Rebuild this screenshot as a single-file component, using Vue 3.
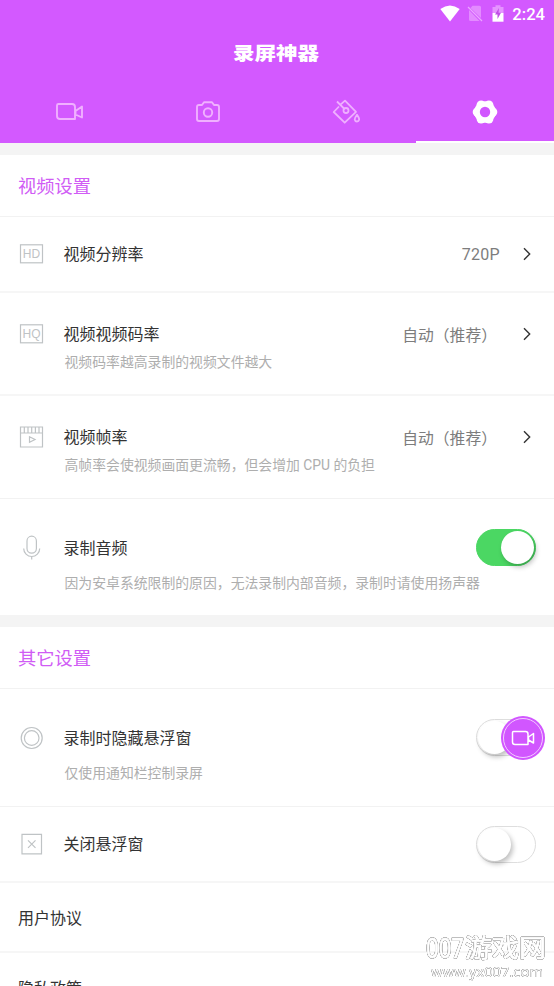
<script setup>
const tabs = ['video', 'camera', 'paint', 'settings']
const sections = [
  {
    title: '视频设置',
    rows: [
      { icon: 'hd', label: '视频分辨率', value: '720P', kind: 'short' },
      { icon: 'hq', label: '视频视频码率', value: '自动（推荐）', cjk: true, note: '视频码率越高录制的视频文件越大', kind: 'medium' },
      { icon: 'film', label: '视频帧率', value: '自动（推荐）', cjk: true, note: '高帧率会使视频画面更流畅，但会增加 CPU 的负担', kind: 'medium thin' },
      { icon: 'mic', label: '录制音频', toggle: 'on', note: '因为安卓系统限制的原因，无法录制内部音频，录制时请使用扬声器', kind: 'tall last' },
    ],
  },
  {
    title: '其它设置',
    rows: [
      { icon: 'ring', label: '录制时隐藏悬浮窗', toggle: 'off', note: '仅使用通知栏控制录屏', kind: 'tall' },
      { icon: 'close', label: '关闭悬浮窗', toggle: 'off', kind: 'short' },
      { label: '用户协议', kind: 'link' },
      { label: '隐私政策', kind: 'link' },
    ],
  },
]
</script>

<template>
  <div class="screen">
    <header class="header">
      <div class="status">
        <svg class="wifi" width="20" height="17" viewBox="0 0 20 17"><path d="M.3 4Q10-3.200 19.700 4L10 16.500Z" fill="#fff" /></svg>
        <svg class="sim" width="16" height="17" viewBox="0 0 16 17"><path d="M5.500.8H12.500Q14 .8 14 2.300V13L3.500 3ZM2 5L12.500 16H3.500Q2 16 2 14.500Z" fill="#e89cff" opacity=".75" /><path d="M1 2L15 16" stroke="#eba5ff" stroke-width="1.300" /></svg>
        <svg class="battery" width="12" height="17" viewBox="0 0 12 17"><path d="M.5 2H3.500V.3H8.500V2H11.500V8H.5Z" fill="#e594ff" /><path d="M.5 8H11.500V16.700H.5Z" fill="#fff" /><path d="M7 3L3 9.500H5.500V14L9 7.800H6.500Z" fill="#c04ee6" /></svg>
        <span class="clock">2:24</span>
      </div>
      <h1 class="app-title">录屏神器</h1>
      <nav class="tabs">
        <div v-for="tab in tabs" :key="tab" class="tab" :class="{ active: tab === 'settings' }">
          <svg v-if="tab === 'video'" width="28" height="26" viewBox="0 0 28 26" fill="none" stroke="#f0b0ff" stroke-width="1.900" stroke-linejoin="round"><path d="M3.500 5H17Q20 5 20 8V20H5Q2 20 2 17V6.500Q2 5 3.500 5ZM20.500 12L27 7.500V18.500L20.500 15.500Z" /></svg>
          <svg v-else-if="tab === 'camera'" width="26" height="26" viewBox="0 0 26 26" fill="none" stroke="#f0b0ff" stroke-width="1.900" stroke-linejoin="round"><path d="M4 6H7L9 3.200H17L19 6H22Q24 6 24 8V20Q24 22 22 22H4Q2 22 2 20V8Q2 6 4 6Z" /><circle cx="13" cy="13.500" r="4.200" /></svg>
          <svg v-else-if="tab === 'paint'" width="28" height="26" viewBox="0 0 28 26" fill="none" stroke="#efb0ff" stroke-width="1.800" stroke-linejoin="round"><path d="M5 2.500L12.500 10M8.500 5.700L13 1.700L24 12.800L12.700 23.700L1.700 13L7 7.500" /><circle cx="14" cy="11.500" r="2.500" /><path d="M25 15.800Q27.200 19 27.200 20.500A2.300 2.500 0 0 1 22.700 20.500Q22.700 19 25 15.800Z" /></svg>
          <svg v-else width="26" height="26" viewBox="0 0 26 26">
            <g fill="#fff"><circle cx="13" cy="13" r="10.800" /><circle cx="5.200" cy="13" r="4.500" /><circle cx="20.800" cy="13" r="4.500" /><circle cx="9.100" cy="5.900" r="4.500" /><circle cx="16.900" cy="5.900" r="4.500" /><circle cx="9.100" cy="20.100" r="4.500" /><circle cx="16.900" cy="20.100" r="4.500" /></g>
            <circle cx="13" cy="13" r="5.200" fill="#d156ff" />
          </svg>
        </div>
      </nav>
    </header>

    <section v-for="section in sections" :key="section.title" class="section">
      <h2 class="section-title">{{ section.title }}</h2>
      <div v-for="row in section.rows" :key="row.label" class="row" :class="row.kind">
        <div class="main">
          <div v-if="row.icon" class="icon">
            <svg width="28" height="28" viewBox="0 0 28 28" fill="none" stroke="#bfc3c5" stroke-width="1.200">
              <template v-if="row.icon === 'hd' || row.icon === 'hq'">
                <rect x="2.500" y="4.800" width="22" height="18" />
                <text x="13.500" y="17.700" text-anchor="middle" class="badge-text">{{ row.icon.toUpperCase() }}</text>
              </template>
              <template v-else-if="row.icon === 'film'">
                <path d="M2.500 4H24.500V24H2.500ZM2.500 10H24.500M6.300 4V10M10 4V10M13.700 4V10M17.400 4V10M21 4V10M11.500 13.800L17 16.500L11.500 19.200Z" />
              </template>
              <template v-else-if="row.icon === 'mic'">
                <rect x="9" y="2.200" width="9.400" height="17" rx="4.700" /><path d="M5.700 14.500A8 8 0 0 0 21.700 14.500M13.700 22V25.500" />
              </template>
              <template v-else-if="row.icon === 'ring'">
                <circle cx="13.700" cy="14" r="10.500" /><circle cx="13.700" cy="14" r="7.300" />
              </template>
              <path v-else d="M4 4.300H23.500V23.800H4ZM10 10.300L17.500 17.800M17.500 10.300L10 17.800" />
            </svg>
          </div>
          <span class="label">{{ row.label }}</span>
          <template v-if="row.value">
            <span class="value" :class="{ cjk: row.cjk }">{{ row.value }}</span>
            <svg class="chevron" width="10" height="14" viewBox="0 0 10 14"><path d="M2 1.200L7.700 7L2 12.800" fill="none" stroke="#333" stroke-width="1.400" /></svg>
          </template>
          <div v-if="row.toggle" class="toggle" :class="row.toggle"><i class="knob"></i></div>
        </div>
        <p v-if="row.note" class="note">{{ row.note }}</p>
      </div>
    </section>

    <div class="floating">
      <svg width="44" height="44" viewBox="0 0 44 44"><circle cx="22" cy="22" r="22" fill="#d156ff" /><circle cx="22" cy="22" r="19.500" fill="none" stroke="#f3ccff" /><path d="M12.500 15.500H24.500Q27 15.500 27 18V28.500H14Q11.500 28.500 11.500 26V16.500Q11.500 15.500 12.500 15.500ZM27.500 21L32.500 17.500V27L27.500 24Z" fill="none" stroke="#fff" stroke-width="1.500" stroke-linejoin="round" /></svg>
    </div>

    <div class="watermark">
      <svg width="130" height="62" viewBox="0 0 130 62">
        <text x="4" y="33" textLength="38" lengthAdjust="spacingAndGlyphs" class="mark num">007</text>
        <text x="43" y="32" textLength="81" lengthAdjust="spacingAndGlyphs" class="mark name">游戏网</text>
        <text x="9" y="52" textLength="112" lengthAdjust="spacingAndGlyphs" class="mark url">www.yx007.com</text>
      </svg>
    </div>
  </div>
</template>

<style>
body { margin: 0; overflow: hidden; }
</style>

<style scoped>
.screen {
  position: relative;
  width: 554px;
  height: 986px;
  overflow: hidden;
  background: #f4f4f4;
  font-family: Roboto, "Noto Sans CJK SC", sans-serif;
}
.header {
  display: flex;
  flex-direction: column;
  height: 143px;
  background: #d359ff;
}
.status {
  display: flex;
  align-items: center;
  height: 27px;
  padding-right: 9px;
  justify-content: flex-end;
  color: #fff;
}
.sim { margin-left: 7px; }
.battery { margin-left: 9px; }
.clock {
  margin-left: 8px;
  font-size: 16.6px;
  font-weight: 500;
  line-height: 27px;
  padding-top: 2px;
}
.app-title {
  margin: 0;
  height: 53px;
  line-height: 53px;
  text-align: center;
  color: #fff;
  font-size: 21.5px;
  font-weight: 900;
  transform: translateX(-1px) scaleY(.87);
}
.tabs { display: flex; flex: 1; }
.tab {
  flex: 1;
  display: flex;
  align-items: center;
  justify-content: center;
  box-sizing: border-box;
  padding-top: 1px;
}
.tab.active { border-bottom: 2px solid #fff; padding-top: 2px; }
.section { margin-top: 12px; background: #fff; }
.section-title {
  box-sizing: border-box;
  height: 62px;
  margin: 0;
  padding: 1px 0 0 18px;
  border-bottom: 1px solid #f2f2f2;
  color: #d05cf5;
  font-size: 18.3px;
  font-weight: 400;
  line-height: 62px;
}
.row {
  box-sizing: border-box;
  padding: 29px 18px 0;
  border-bottom: 2px solid #f6f6f6;
}
.short { height: 76px; padding-top: 25px; }
.medium { height: 103px; }
.tall { height: 118px; padding-top: 37px; border-bottom: 1px solid #f2f2f2; }
.thin { border-bottom: 1px solid #f2f2f2; }
.last { height: 116px; border-bottom: none; }
.link { height: 70px; padding-top: 23px; }
.main { display: flex; align-items: center; height: 24px; }
.icon { width: 45.5px; flex: none; display: flex; }
.label { flex: 1; color: #333; font-size: 16px; line-height: 24px; padding-top: 2px; }
.value { color: #7d7d7d; font-size: 16px; letter-spacing: .3px; margin-right: 22px; padding-top: 1px; }
.value.cjk { letter-spacing: 0; font-size: 15.8px; margin-right: 25px; padding-top: 0; }
.chevron { margin-right: 4px; }
.note {
  margin: 6px 0 0 46.5px;
  color: #aeaeae;
  font-size: 13.85px;
  line-height: 20px;
  white-space: nowrap;
}
.tall .note { margin-top: 13px; }
.badge-text {
  font: 12px "Liberation Sans", sans-serif;
  fill: #bfc3c5;
  stroke: none;
}
.toggle {
  box-sizing: border-box;
  display: flex;
  flex: none;
  width: 60.5px;
  height: 37px;
  margin-bottom: 1px;
  padding: 1px;
  border: 1px solid #dedede;
  border-radius: 19px;
  background: #fff;
}
.short .toggle { margin-bottom: 0; }
.toggle.on {
  justify-content: flex-end;
  border-color: #4bd763;
  background: #4bd763;
}
.knob {
  width: 33px;
  height: 33px;
  border-radius: 50%;
  background: #fff;
  box-shadow: 2px 3px 5px rgba(0, 0, 0, .25);
}
.floating { position: absolute; left: 501px; top: 715.5px; width: 44px; height: 44px; }
.watermark { position: absolute; left: 422px; top: 925px; width: 130px; height: 62px; }
.mark {
  font-family: "Noto Sans", "Noto Sans CJK SC", sans-serif;
  fill: #fff;
  stroke: #fff;
  stroke-width: 1px;
  stroke-linejoin: round;
  filter: drop-shadow(0 0 .5px #555) drop-shadow(0 0 .5px #777);
}
.num { font-size: 28px; }
.name { font-size: 25px; font-weight: 400; }
.url { font-size: 14.5px; stroke-width: .2px; }
</style>
